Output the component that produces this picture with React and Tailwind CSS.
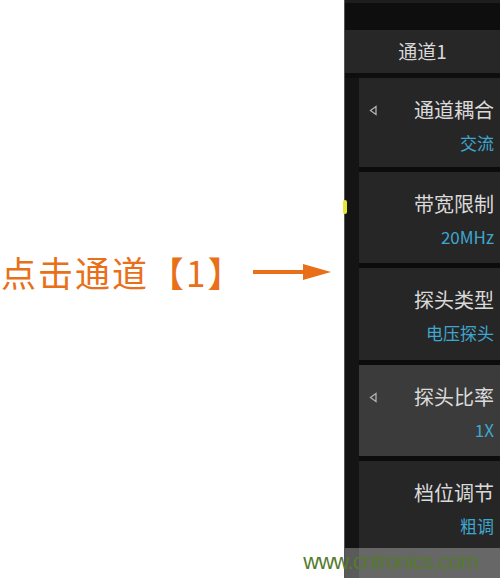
import React from "react";

const items = [
  { label: "通道耦合", value: "交流", h: "h-[89px]", arrow: true },
  { label: "带宽限制", value: "20MHz", h: "h-[91px]" },
  { label: "探头类型", value: "电压探头", h: "h-[92px]" },
  { label: "探头比率", value: "1X", h: "h-[91px]", arrow: true, active: true },
  { label: "档位调节", value: "粗调", h: "flex-1" },
];

const MenuItem = ({ item }) => (
  <div
    className={`${item.h} relative flex flex-col items-end pr-[6px] ${
      item.active ? "bg-[#3b3b3b]" : "bg-[#262626]"
    }`}
  >
    {item.arrow && (
      <svg className="absolute left-[10px] top-[27px]" width="8" height="11" viewBox="0 0 8 11">
        <path d="M7 1.5 L1.5 5.5 L7 9.5 Z" fill="none" stroke="#b0b0b0" strokeWidth="1.3" />
      </svg>
    )}
    <div className="mt-[18px] text-[20px] leading-[28px] text-[#dadada]">{item.label}</div>
    <div className="mt-[7px] text-[17px] leading-[24px] text-[#3fa6cf]">{item.value}</div>
  </div>
);

export default function App() {
  return (
    <div
      className="relative flex h-[578px] w-[500px] overflow-hidden bg-white"
      style={{ fontFamily: '"Noto Sans CJK SC", "Liberation Sans", sans-serif' }}
    >
      {/* annotation */}
      <div className="flex flex-1 items-center pb-[34px]">
        <div className="ml-[1px] flex items-center text-[35px] tracking-[2px] text-[#e96f18]">
          <span>点击通道</span>
          <span>【1】</span>
        </div>
        <svg className="ml-[9px]" width="80" height="20" viewBox="0 0 80 20">
          <rect x="0" y="8" width="54" height="4" fill="#e96f18" />
          <path d="M50 2 L78 10 L50 18 Z" fill="#e96f18" />
        </svg>
      </div>

      {/* scope menu panel */}
      <div className="relative flex w-[156px] flex-col border-l border-[#555] bg-[#0e0e0e]">
        <div className="h-[3px] bg-[#1e1e1e]" />
        <div className="h-[27px]" />
        <div className="flex h-[43px] items-center justify-center bg-[#272727] text-[19px] text-[#d8d8d8]">
          通道1
        </div>
        <div className="flex flex-1 pt-[5px]">
          <div className="w-[14px] bg-[#141414]" />
          <div className="flex flex-1 flex-col gap-[5px] bg-[#0c0c0c]">
            {items.map((it) => (
              <MenuItem key={it.label} item={it} />
            ))}
          </div>
        </div>
        <div className="absolute left-[-2px] top-[200px] h-[14px] w-[4px] rounded-full bg-[#e6e830]" />
      </div>

      {/* watermark */}
      <div className="absolute bottom-0 left-[345px] h-[30px] w-[155px] bg-white/30" />
      <div
        className="absolute bottom-[3px] right-[22px] text-[22px] leading-[26px] tracking-[-0.8px] text-[#557a2e]"
        style={{ fontFamily: '"Liberation Sans", sans-serif' }}
      >
        www.cntronics.com
      </div>
    </div>
  );
}
